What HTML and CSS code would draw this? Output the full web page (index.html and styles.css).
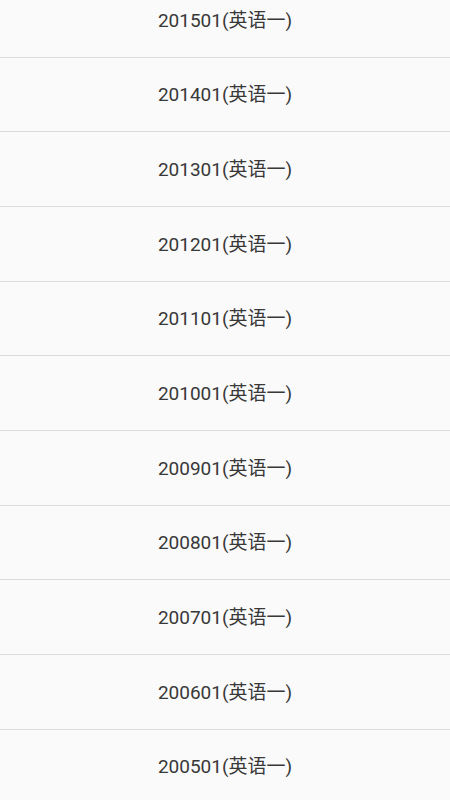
FILE: index.html
```html
<!DOCTYPE html>
<html lang="zh">
<head>
<meta charset="utf-8">
<link rel="stylesheet" href="styles.css">
</head>
<body>
<ul class="list">
  <li class="item">201501(英语一)</li>
  <li class="item">201401(英语一)</li>
  <li class="item">201301(英语一)</li>
  <li class="item">201201(英语一)</li>
  <li class="item">201101(英语一)</li>
  <li class="item">201001(英语一)</li>
  <li class="item">200901(英语一)</li>
  <li class="item">200801(英语一)</li>
  <li class="item">200701(英语一)</li>
  <li class="item">200601(英语一)</li>
  <li class="item">200501(英语一)</li>
</ul>
</body>
</html>
```
FILE: styles.css
```css
html, body {
  margin: 0;
  padding: 0;
  background: #fafafa;
  overflow: hidden;
  height: 800px;
}
.list {
  list-style: none;
  margin: -17px 0 0 0;
  padding: 0;
}
.item {
  box-sizing: border-box;
  height: 74.67px;
  border-bottom: 1px solid #dcdcdc;
  display: flex;
  align-items: center;
  justify-content: center;
  font-family: Roboto, "Noto Sans CJK SC", sans-serif;
  font-size: 19px;
  color: #383838;
  padding-bottom: 3px;
}
```
